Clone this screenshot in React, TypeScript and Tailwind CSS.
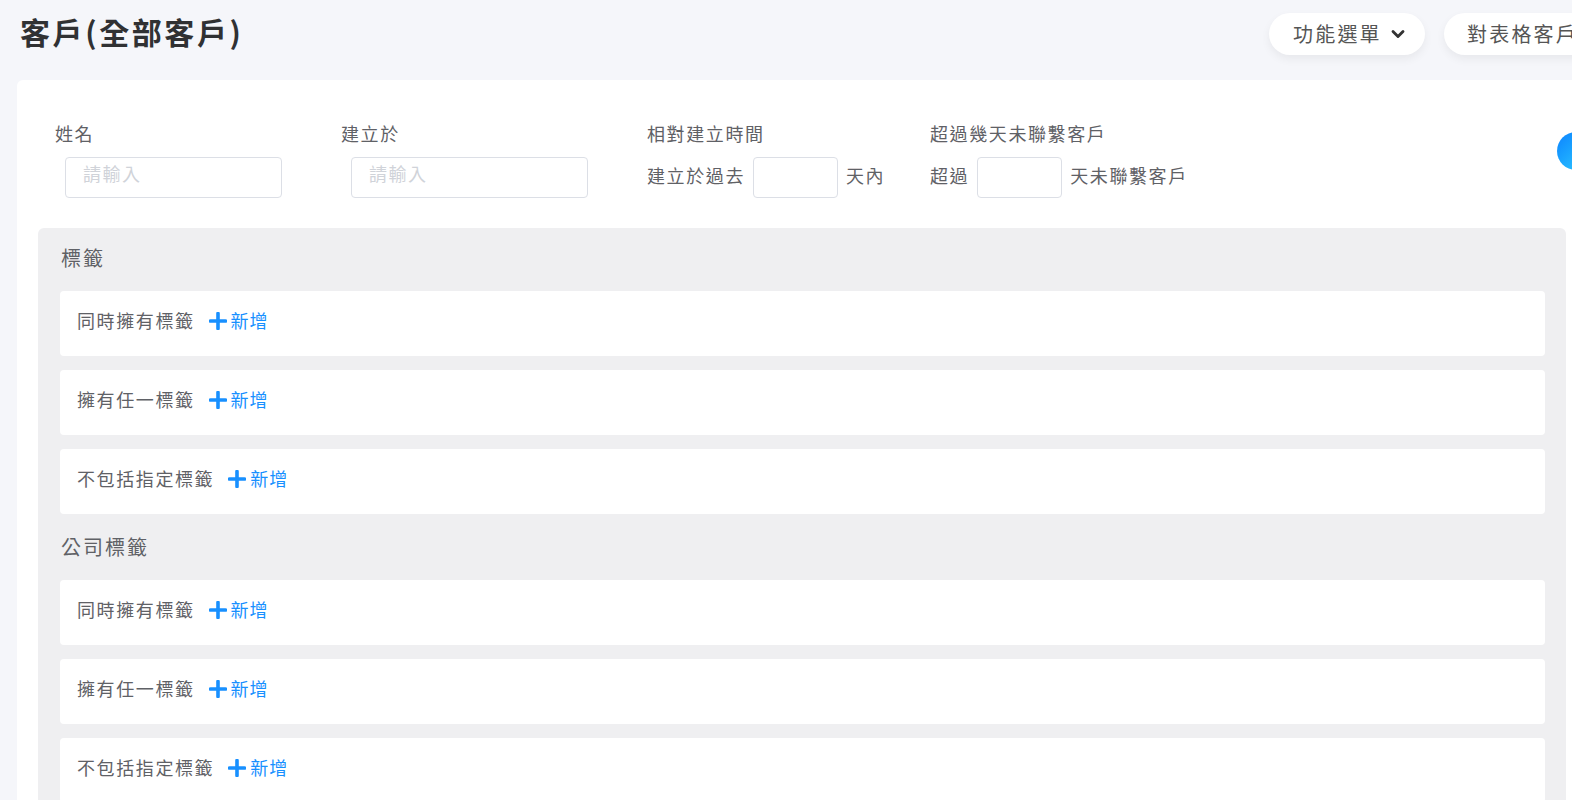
import { ChevronDown } from "lucide-react";

const font = { fontFamily: '"Noto Sans CJK TC", "Noto Sans", sans-serif' };

function PlusIcon() {
  return (
    <svg width="18" height="18" viewBox="0 0 18 18" className="shrink-0">
      <path d="M9 1.5v15M1.5 9h15" stroke="#1890ff" strokeWidth="3.6" strokeLinecap="round" />
    </svg>
  );
}

function TagRow({ label }: { label: string }) {
  return (
    <div className="flex h-[65px] items-center rounded-[4px] bg-white pb-[6px] pl-[17px]">
      <span className="text-[18px] tracking-[1.6px] text-[#5f6166]">{label}</span>
      <button className="ml-[14px] flex items-center gap-[4px] text-[18px] tracking-[1px] text-[#1890ff]">
        <PlusIcon />
        新增
      </button>
    </div>
  );
}

function TagSection({ title, top }: { title: string; top: string }) {
  return (
    <div>
      <div className={`${top} pb-[21px] pl-[1px] text-[20px] leading-[24px] tracking-[2px] text-[#5f6166]`}>
        {title}
      </div>
      <div className="flex flex-col gap-[14px]">
        <TagRow label="同時擁有標籤" />
        <TagRow label="擁有任一標籤" />
        <TagRow label="不包括指定標籤" />
      </div>
    </div>
  );
}

function TextInput({ width }: { width: string }) {
  return (
    <input
      placeholder="請輸入"
      className={`${width} h-[41px] rounded-[4px] border border-[#dcdfe6] bg-white px-[17px] pb-[9px] text-[18px] tracking-[1.5px] outline-none placeholder:text-[#d0d3d9]`}
    />
  );
}

const label = "text-[18px] leading-[24px] tracking-[1.6px] text-[#5f6166]";

export default function App() {
  return (
    <div className="w-full overflow-hidden bg-[#f5f6fa]" style={font}>
      <div className="w-[1610px] px-[17px]">
        <header className="flex h-[80px] w-[1576px] items-start">
          <h1 className="mt-[11px] ml-[3px] shrink-0 whitespace-nowrap text-[30px] leading-[40px] font-semibold tracking-[2.6px] text-[#303133]">
            客戶(全部客戶)
          </h1>
          <div className="mt-[13px] mr-[-33px] ml-auto flex shrink-0 gap-[19px]">
            <button className="flex h-[42px] w-[156px] items-center gap-[6px] rounded-full bg-white pl-[24px] text-[20px] tracking-[2.2px] whitespace-nowrap text-[#555] shadow-[0_4px_10px_rgba(0,0,0,0.06)]">
              功能選單
              <ChevronDown size={20} strokeWidth={3.4} className="text-[#333]" />
            </button>
            <button className="flex h-[42px] w-[182px] items-center gap-[6px] rounded-full bg-white pl-[23px] text-[20px] tracking-[2.2px] whitespace-nowrap text-[#555] shadow-[0_4px_10px_rgba(0,0,0,0.06)]">
              對表格客戶
              <ChevronDown size={20} strokeWidth={3.4} className="text-[#333]" />
            </button>
          </div>
        </header>

        <main className="min-h-[720px] w-[1570px] rounded-t-[6px] bg-white px-[21px]">
          <div className="flex items-start pt-[41px] pb-[30px] pl-[17px]">
            <div className="w-[286px] shrink-0">
              <div className={label}>姓名</div>
              <div className="mt-[12px] pl-[10px]">
                <TextInput width="w-[217px]" />
              </div>
            </div>
            <div className="w-[306px] shrink-0">
              <div className={label}>建立於</div>
              <div className="mt-[12px] pl-[10px]">
                <TextInput width="w-[237px]" />
              </div>
            </div>
            <div className="w-[283px] shrink-0">
              <div className={label}>相對建立時間</div>
              <div className={`mt-[12px] flex items-center gap-[8px] ${label}`}>
                <span className="pb-[5px]">建立於過去</span>
                <input className="h-[41px] w-[85px] rounded-[4px] border border-[#dcdfe6] outline-none" />
                <span className="pb-[5px]">天內</span>
              </div>
            </div>
            <div className="w-[627px] shrink-0">
              <div className={label}>超過幾天未聯繫客戶</div>
              <div className={`mt-[12px] flex items-center gap-[8px] ${label}`}>
                <span className="pb-[5px]">超過</span>
                <input className="h-[41px] w-[85px] rounded-[4px] border border-[#dcdfe6] outline-none" />
                <span className="pb-[5px]">天未聯繫客戶</span>
              </div>
            </div>
            <button className="mt-[11px] h-[38px] w-[38px] shrink-0 rounded-full bg-gradient-to-br from-[#1182ff] to-[#37cfff]" />
          </div>

          <div className="rounded-[6px] bg-[#efeff1] pr-[21px] pb-[20px] pl-[22px]">
            <TagSection title="標籤" top="pt-[18px]" />
            <TagSection title="公司標籤" top="pt-[21px]" />
          </div>
        </main>
      </div>
    </div>
  );
}
